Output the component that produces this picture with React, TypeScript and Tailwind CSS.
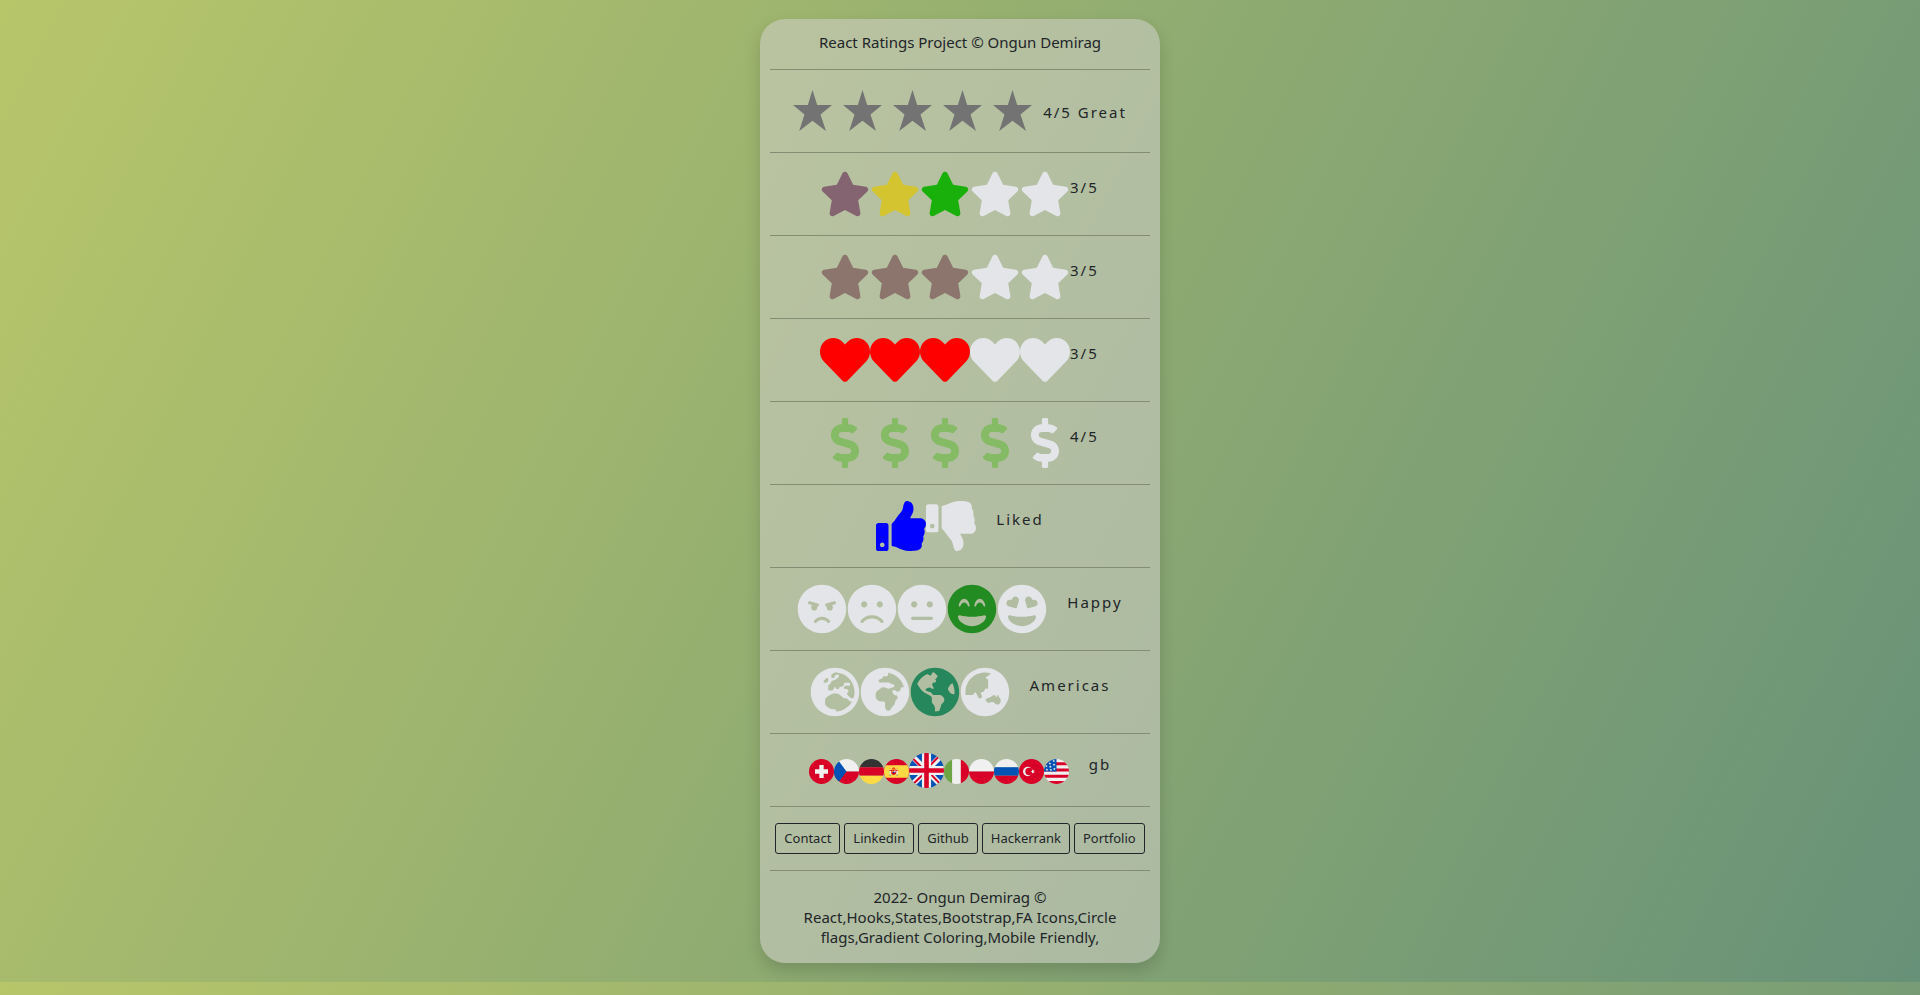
import React from "react";
import {
  FaStar, FaHeart, FaDollarSign, FaThumbsUp, FaThumbsDown, FaAngry, FaFrown, FaMeh,
  FaGrinBeam, FaGrinHearts, FaGlobeEurope, FaGlobeAfrica, FaGlobeAmericas, FaGlobeAsia,
} from "react-icons/fa";
import type { IconType } from "react-icons";

type Item = { icon: IconType; color: string; name: string };

const OFF = "text-[#e4e5e9]";

const same = (icon: IconType, name: string, color: string, on: number): Item[] =>
  [1, 2, 3, 4, 5].map((n) => ({ icon, color: n <= on ? color : OFF, name: `${n} ${name}` }));

const colored: Item[] = [
  { icon: FaStar, color: "text-[#836470]", name: "1 star" },
  { icon: FaStar, color: "text-[#d4c430]", name: "2 stars" },
  { icon: FaStar, color: "text-[#1ab00c]", name: "3 stars" },
  { icon: FaStar, color: OFF, name: "4 stars" },
  { icon: FaStar, color: OFF, name: "5 stars" },
];

const thumbs: Item[] = [
  { icon: FaThumbsUp, color: "text-[#0000ff]", name: "Like" },
  { icon: FaThumbsDown, color: OFF, name: "Dislike" },
];

const faces: Item[] = [
  { icon: FaAngry, color: OFF, name: "Angry" },
  { icon: FaFrown, color: OFF, name: "Sad" },
  { icon: FaMeh, color: OFF, name: "Neutral" },
  { icon: FaGrinBeam, color: "text-[#228b22]", name: "Happy" },
  { icon: FaGrinHearts, color: OFF, name: "Love" },
];

const globes: Item[] = [
  { icon: FaGlobeEurope, color: OFF, name: "Europe" },
  { icon: FaGlobeAfrica, color: OFF, name: "Africa" },
  { icon: FaGlobeAmericas, color: "text-[#26865c]", name: "Americas" },
  { icon: FaGlobeAsia, color: OFF, name: "Asia" },
];

const Divider = () => <hr className="my-4 border-t border-[#838d74]" />;

function Row({ items, label, wide }: { items: Item[]; label: string; wide?: boolean }) {
  return (
    <div className="flex h-[50px] justify-center">
      {items.map(({ icon: Icon, color, name }) => (
        <button key={name} type="button" aria-label={name} className={color}>
          <Icon size={50} />
        </button>
      ))}
      <span className={wide ? "pl-5 pt-1.5 tracking-[2px]" : "min-w-[30px] pt-1.5 tracking-[2px]"}>{label}</span>
    </div>
  );
}

const RED = "#d80027";
const BLUE = "#0052b4";
const WHITE = "#f0f0f0";
const YELLOW = "#ffda44";
const STAR = "0,-10 2.4,-3.2 9.5,-3.1 3.8,1.2 5.9,8.1 0,4 -5.9,8.1 -3.8,1.2 -9.5,-3.1 -2.4,-3.2";

const bars = (a: string, b: string, c: string) => (
  <>
    <path fill={a} d="M0 0h512v171H0z" />
    <path fill={b} d="M0 167h512v178H0z" />
    <path fill={c} d="M0 345h512v167H0z" />
  </>
);

const flags: { code: string; art: React.ReactNode }[] = [
  {
    code: "ch",
    art: (
      <>
        <path fill={RED} d="M0 0h512v512H0z" />
        <path fill={WHITE} d="M389.6 211.5h-89v-89h-89.1v89h-89v89h89v89h89v-89h89z" />
      </>
    ),
  },
  {
    code: "cz",
    art: (
      <>
        <path fill={WHITE} d="M0 0h512v256H0z" />
        <path fill={RED} d="M0 256h512v256H0z" />
        <path fill={BLUE} d="M0 0h67l189 256L67 512H0z" />
      </>
    ),
  },
  { code: "de", art: bars("#333333", RED, YELLOW) },
  {
    code: "es",
    art: (
      <>
        <path fill={RED} d="M0 0h512v512H0z" />
        <path fill={YELLOW} d="M0 128h512v256H0z" />
        <path fill={WHITE} d="M114 208h28v112h-28zM256 208h28v112h-28z" />
        <path fill={RED} d="M110 232h36v16h-36zM252 232h36v16h-36zM148 222h102v66q-6 36-51 40q-45-4-51-40zM164 188q35-32 70 0l-10 22h-50z" />
        <path fill="#ff9811" d="M108 196h36v14h-36zM254 196h36v14h-36zM168 196h62v14h-62zM152 240h46v30h-46z" />
        <path fill={WHITE} d="M202 238h36v34h-36z" />
        <path fill={BLUE} d="M108 320h38v14h-38zM252 320h38v14h-38zM182 262h34v26h-34z" />
      </>
    ),
  },
  {
    code: "gb",
    art: (
      <>
        <path fill={BLUE} d="M0 0h512v512H0z" />
        <path stroke={WHITE} strokeWidth="82" d="M0 0l512 512M512 0L0 512" />
        <path stroke={RED} strokeWidth="30" d="M-12 12l268 268M244 232L524 524M500 -12L244 244M268 256L-12 524" />
        <path stroke={WHITE} strokeWidth="134" d="M256 0v512M0 256h512" />
        <path stroke={RED} strokeWidth="67" d="M256 0v512M0 256h512" />
      </>
    ),
  },
  {
    code: "it",
    art: (
      <>
        <path fill="#6da544" d="M0 0h167v512H0z" />
        <path fill={WHITE} d="M167 0h178v512H167z" />
        <path fill={RED} d="M345 0h167v512H345z" />
      </>
    ),
  },
  {
    code: "pl",
    art: (
      <>
        <path fill={WHITE} d="M0 0h512v256H0z" />
        <path fill={RED} d="M0 256h512v256H0z" />
      </>
    ),
  },
  { code: "ru", art: bars(WHITE, BLUE, RED) },
  {
    code: "tr",
    art: (
      <>
        <path fill={RED} d="M0 0h512v512H0z" />
        <circle cx="178" cy="256" r="96" fill={WHITE} />
        <circle cx="206" cy="256" r="76" fill={RED} />
        <polygon fill={WHITE} points={STAR} transform="translate(282 256) rotate(-18) scale(4.8)" />
      </>
    ),
  },
  {
    code: "us",
    art: (
      <>
        <path fill={WHITE} d="M0 0h512v512H0z" />
        <path fill={RED} d="M0 64h512v64H0zM0 192h512v64H0zM0 320h512v64H0zM0 448h512v64H0z" />
        <path fill={BLUE} d="M0 0h256v256H0z" />
        {[[200, 40], [120, 92], [206, 118], [50, 148], [130, 160], [212, 206], [60, 220], [140, 226]].map(([x, y]) => (
          <polygon key={`${x}-${y}`} fill={WHITE} points={STAR} transform={`translate(${x} ${y}) scale(3)`} />
        ))}
      </>
    ),
  },
];

const links = ["Contact", "Linkedin", "Github", "Hackerrank", "Portfolio"];

export default function App() {
  return (
    <div className="font-['Noto_Sans','Open_Sans',sans-serif] text-[15px] leading-6 text-[#212529]">
      <div className="bg-[linear-gradient(117deg,#b8c66a_0%,#679178_100%)] py-[19px]">
        <main className="mx-auto w-full max-w-[400px] rounded-[25px] bg-[#d6d2d2]/50 px-2.5 pt-3 pb-4 shadow-[0_8px_16px_rgba(0,0,0,0.15)]">
          <h1 className="text-center leading-[22px]">React Ratings Project © Ongun Demirag</h1>
          <Divider />
          <div className="flex h-[50px] items-center justify-center">
            {[1, 2, 3, 4, 5].map((n) => (
              <button key={n} type="button" aria-label={`Rate ${n}`} className="w-[50px]">
                <svg viewBox="0 0 50 50" className="size-[50px]">
                  <polygon fill="#737373" points="19.5,4 24.2,19 39,19 27.5,28.4 33,45 19.5,34.7 6.2,45 11.5,28.4 0,19 14.8,19" />
                </svg>
              </button>
            ))}
            <span className="pt-0.5 tracking-[2px]">4/5 Great</span>
          </div>
          <Divider />
          <Row items={colored} label="3/5" />
          <Divider />
          <Row items={same(FaStar, "brown", "text-[#8c756c]", 3)} label="3/5" />
          <Divider />
          <Row items={same(FaHeart, "hearts", "text-[#ff0000]", 3)} label="3/5" />
          <Divider />
          <Row items={same(FaDollarSign, "dollars", "text-[#85bb65]", 4)} label="4/5" />
          <Divider />
          <Row items={thumbs} label="Liked" wide />
          <Divider />
          <Row items={faces} label="Happy" wide />
          <Divider />
          <Row items={globes} label="Americas" wide />
          <Divider />
          <div className="flex h-10 justify-center">
            <div className="flex items-center">
              {flags.map(({ code, art }) => (
                <button key={code} type="button" aria-label={code}>
                  <svg viewBox="0 0 512 512" className={code === "gb" ? "size-[35px] rounded-full" : "mt-0.5 size-[25px] rounded-full"}>
                    {art}
                  </svg>
                </button>
              ))}
            </div>
            <span className="pl-5 pt-0.5 tracking-[2px]">gb</span>
          </div>
          <Divider />
          <nav className="flex justify-center gap-1">
            {links.map((t) => (
              <a key={t} href={`#${t.toLowerCase()}`} className="rounded-[3px] border border-[#212529] px-2 py-1 text-[13px] leading-[21px]">
                {t}
              </a>
            ))}
          </nav>
          <Divider />
          <footer className="px-5 text-center leading-5">
            <p>2022- Ongun Demirag ©</p>
            <p>React,Hooks,States,Bootstrap,FA Icons,Circle flags,Gradient Coloring,Mobile Friendly,</p>
          </footer>
        </main>
      </div>
      <div className="h-[13px] bg-[linear-gradient(117deg,#b8c66a_0%,#679178_100%)] bg-[length:100%_982px]" />
    </div>
  );
}
